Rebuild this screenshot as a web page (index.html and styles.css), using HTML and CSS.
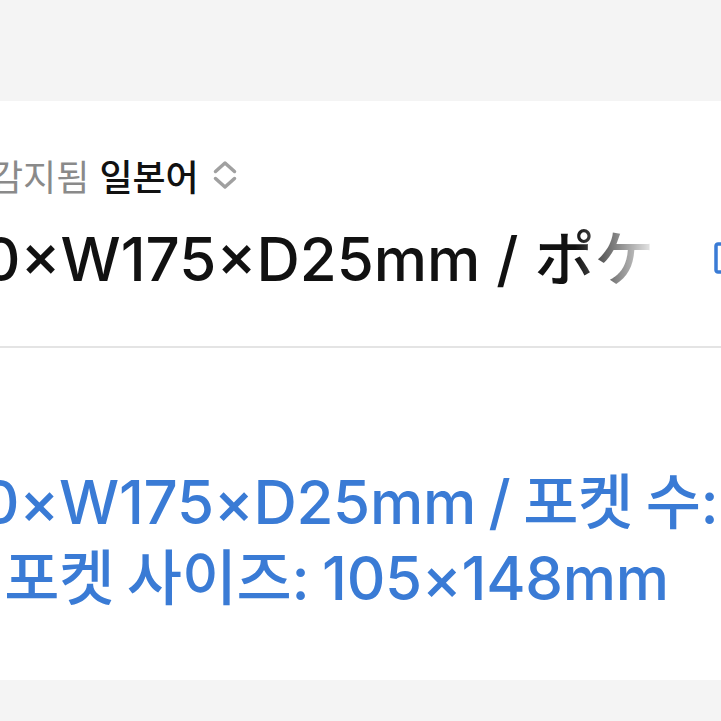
FILE: index.html
```html
<!DOCTYPE html>
<html lang="ko">
<head>
    <meta charset="UTF-8">
    <meta name="viewport" content="width=device-width, initial-scale=1.0">
    <title>번역</title>
    <link rel="stylesheet" href="styles.css">
</head>
<body>
    <div class="page">
        <div class="card">
            <section class="source">
                <div class="lang-row">
                    <span class="detected">감지됨</span>
                    <span class="lang">일본어</span>
                    <svg class="chevrons" width="24" height="30" viewBox="0 0 24 30">
                        <path d="M2.5 11.5 L12 3 L21.5 11.5" />
                        <path d="M2.5 18.5 L12 27 L21.5 18.5" />
                    </svg>
                </div>
                <div class="source-row">
                    <p class="source-text">H250×W175×D25mm / ポケット数：4 / ポケットサイズ：105×148mm</p>
                    <svg class="more" width="30" height="34" viewBox="0 0 30 34">
                        <rect x="2" y="2" width="24" height="28" rx="2" />
                    </svg>
                </div>
            </section>
            <section class="result">
                <p class="result-text">H250×W175×D25mm / 포켓 수:<br>4개 / 포켓 사이즈: 105×148mm</p>
            </section>
        </div>
    </div>
</body>
</html>
```

FILE: styles.css
```css
/* Styles généraux */
body {
    margin: 0;
    padding: 0;
    background-color: #f4f4f4;
    font-family: 'Inter', 'Noto Sans CJK KR', sans-serif;
    color: #111;
}

.page {
    padding: 101px 0 41px;
}

.card {
    background-color: #fff;
    overflow: hidden;
}

/* Zone texte source */
.source {
    padding: 52px 0 49px;
    border-bottom: 2px solid #e4e4e4;
}

.lang-row {
    display: flex;
    align-items: center;
    gap: 10px;
    margin-left: -10px;
    height: 44px;
    font-family: 'Noto Sans CJK KR', sans-serif;
    font-size: 36px;
}

.detected {
    color: #8a8a8a;
}

.lang {
    color: #111;
    font-weight: 500;
}

.chevrons {
    margin-left: 4px;
}

.chevrons path {
    fill: none;
    stroke: #a0a0a0;
    stroke-width: 3.5;
    stroke-linecap: round;
    stroke-linejoin: round;
}

.source-row {
    display: flex;
    align-items: center;
    margin: 24px 0 0 -137px;
    width: calc(100% + 137px);
}

.source-text {
    flex: 1;
    min-width: 0;
    margin: 0;
    font-size: 60px;
    line-height: 76px;
    font-weight: 500;
    white-space: nowrap;
    overflow: hidden;
    -webkit-mask-image: linear-gradient(to right, #000 712px, transparent 797px);
    mask-image: linear-gradient(to right, #000 712px, transparent 797px);
}

.more {
    flex: none;
    margin-right: -23px;
}

.more rect {
    fill: none;
    stroke: #3a7bd5;
    stroke-width: 3.5;
}

/* Zone traduction */
.result {
    padding: 116px 0 64px;
}

.result-text {
    margin: 0 0 0 -137px;
    font-size: 60px;
    line-height: 76px;
    font-weight: 500;
    color: #3a7bd5;
    letter-spacing: -0.3px;
    word-spacing: -3px;
    white-space: nowrap;
}
```
